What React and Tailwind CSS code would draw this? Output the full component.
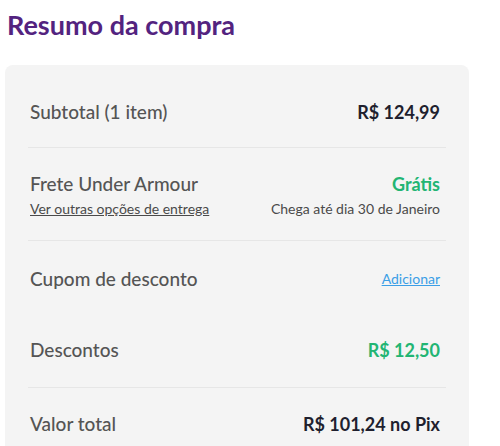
export default function App() {
  return (
    <div className="w-[500px] h-[446px] overflow-hidden bg-white font-['Lato',sans-serif]">
      <h2 className="pl-[7px] pt-[10px] text-[27px] leading-[30px] font-bold text-[#53237f]">
        Resumo da compra
      </h2>
      <div className="mt-[25px] ml-[5px] w-[464px] rounded-[8px] bg-[#f4f4f4] px-[23px] pt-[12px] pb-[40px]">
        <div className="flex items-center justify-between pl-[2px] pr-[6px] pt-[25px] pb-[25px] border-b border-[#e6e6e6]">
          <span className="text-[19px] leading-[20px] font-medium text-[#555]">Subtotal (1 item)</span>
          <span className="text-[18px] leading-[20px] font-bold text-[#1f1f2e]">R$ 124,99</span>
        </div>

        <div className="flex items-start justify-between pl-[2px] pr-[6px] pt-[26px] pb-[23px] border-b border-[#e6e6e6]">
          <div className="flex flex-col">
            <span className="text-[19px] leading-[20px] font-medium text-[#555]">Frete Under Armour</span>
            <a className="mt-[7px] text-[14px] leading-[16px] text-[#4a4a4a] underline">
              Ver outras opções de entrega
            </a>
          </div>
          <div className="flex flex-col items-end">
            <span className="text-[18px] leading-[20px] font-bold text-[#22b573]">Grátis</span>
            <span className="mt-[7px] text-[14px] leading-[16px] text-[#4a4a4a]">
              Chega até dia 30 de Janeiro
            </span>
          </div>
        </div>

        <div className="flex items-center justify-between pl-[2px] pr-[6px] pt-[28px]">
          <span className="text-[19px] leading-[20px] font-medium text-[#555]">Cupom de desconto</span>
          <a className="text-[14px] leading-[16px] text-[#3b9ee6] underline">Adicionar</a>
        </div>

        <div className="flex items-center justify-between pl-[2px] pr-[6px] pt-[51px] pb-[27px] border-b border-[#e6e6e6]">
          <span className="text-[19px] leading-[20px] font-medium text-[#555]">Descontos</span>
          <span className="text-[18px] leading-[20px] font-bold text-[#22b573]">R$ 12,50</span>
        </div>

        <div className="flex items-center justify-between pl-[2px] pr-[6px] pt-[26px]">
          <span className="text-[19px] leading-[20px] font-medium text-[#555]">Valor total</span>
          <span className="text-[18px] leading-[20px] font-bold text-[#1f1f2e]">R$ 101,24 no Pix</span>
        </div>
      </div>
    </div>
  );
}
